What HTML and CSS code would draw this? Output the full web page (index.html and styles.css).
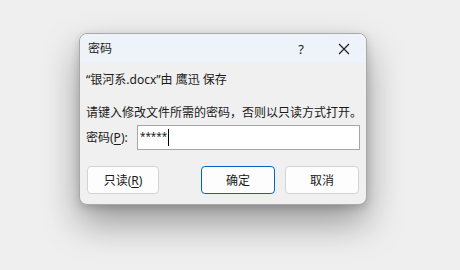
FILE: index.html
```html
<!DOCTYPE html>
<html lang="zh-CN">
<head>
<meta charset="utf-8">
<title>密码</title>
<link rel="stylesheet" href="styles.css">
</head>
<body>
<div class="dialog">
  <div class="titlebar">
    <span class="title">密码</span>
    <span class="help">?</span>
    <span class="close">
      <svg width="12" height="12" viewBox="0 0 12 12"><path d="M1 1L11 11M11 1L1 11" stroke="#1a1a1a" stroke-width="1.1" fill="none"/></svg>
    </span>
  </div>
  <div class="content">
    <p class="line saved">“银河系.docx”由 鹰迅 保存</p>
    <p class="line prompt">请键入修改文件所需的密码，否则以只读方式打开。</p>
    <div class="pwrow">
      <label class="pwlabel">密码(<u>P</u>):</label>
      <div class="input"><span class="stars">*****</span><span class="caret"></span></div>
    </div>
    <div class="buttons">
      <button class="btn">只读(<u>R</u>)</button>
      <span class="spacer"></span>
      <button class="btn primary">确定</button>
      <button class="btn">取消</button>
    </div>
  </div>
</div>
</body>
</html>
```
FILE: styles.css
```css
html, body {
  margin: 0;
  padding: 0;
  background: #efefef;
  width: 460px;
  height: 270px;
  overflow: hidden;
  font-family: "Noto Sans", "Noto Sans CJK SC", sans-serif;
  font-size: 12px;
  color: #1a1a1a;
}
body {
  padding-top: 33px;
  padding-left: 79px;
  box-sizing: border-box;
}
.dialog {
  width: 288px;
  height: 172px;
  box-sizing: border-box;
  background: #f0f0f0;
  border: 1px solid #a9a9a9;
  border-radius: 8px;
  box-shadow: 0 18px 36px rgba(0, 0, 0, 0.36), 0 3px 8px rgba(0, 0, 0, 0.16);
  overflow: hidden;
  display: flex;
  flex-direction: column;
}
.titlebar {
  height: 29px;
  background: #eef2f9;
  display: flex;
  align-items: center;
  padding-left: 8px;
  flex: none;
}
.title {
  flex: 1;
  line-height: 16px;
}
.help {
  width: 16px;
  text-align: center;
  margin-right: 29px;
  font-size: 13px;
}
.close {
  width: 12px;
  height: 12px;
  display: flex;
  margin-right: 16px;
}
.content {
  padding: 9px 6px 0 6px;
  display: flex;
  flex-direction: column;
}
.line {
  margin: 0;
  line-height: 16px;
  white-space: nowrap;
}
.prompt {
  margin-top: 17px;
}
.pwrow {
  display: flex;
  align-items: center;
  margin-top: 4px;
}
.pwlabel {
  width: 51px;
  line-height: 16px;
}
.input {
  flex: 1;
  height: 25px;
  box-sizing: border-box;
  background: #ffffff;
  border: 1px solid #a5a5a5;
  display: flex;
  align-items: center;
  padding-left: 2px;
}
.stars {
  font-size: 10px;
  letter-spacing: -0.1px;
  line-height: 12px;
  position: relative;
  top: -2px;
}
.caret {
  width: 1px;
  height: 17px;
  background: #000;
  margin-left: 1px;
}
.buttons {
  display: flex;
  margin-top: 16px;
  padding: 0 1px;
  gap: 10px;
}
.spacer {
  flex: 1;
}
.btn {
  width: 74px;
  height: 28px;
  box-sizing: border-box;
  background: #fdfdfd;
  border: 1px solid #d3d3d3;
  border-radius: 4px;
  font-family: inherit;
  font-size: 12px;
  color: #1a1a1a;
  padding: 0;
}
.btn:first-child {
  width: 72px;
}
.primary {
  border-color: #0067c0;
}
u {
  text-decoration-thickness: 1px;
  text-underline-offset: 2px;
}
```
